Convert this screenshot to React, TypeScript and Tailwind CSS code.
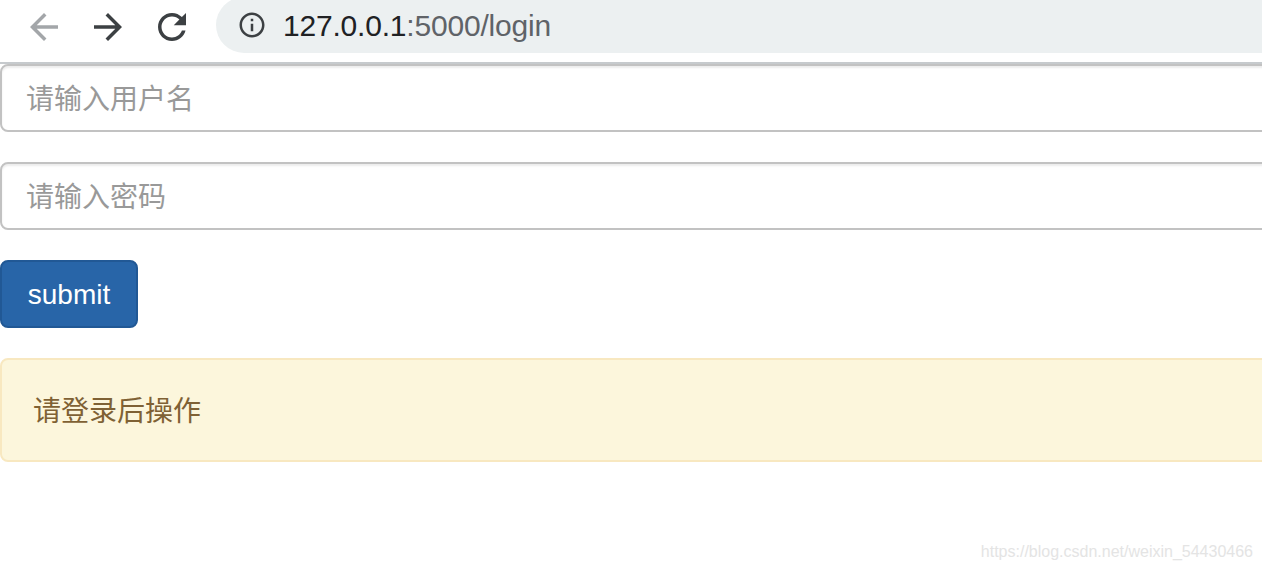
const sans = { fontFamily: '"Liberation Sans", "Noto Sans CJK SC", Arial, sans-serif' };

function BackIcon({ className }: { className?: string }) {
  return (
    <svg viewBox="0 0 24 24" className={className} fill="currentColor">
      <path d="M20 11H7.83l5.59-5.59L12 4l-8 8 8 8 1.41-1.41L7.83 13H20v-2z" />
    </svg>
  );
}

function ForwardIcon({ className }: { className?: string }) {
  return (
    <svg viewBox="0 0 24 24" className={className} fill="currentColor">
      <path d="M12 4l-1.41 1.41L16.17 11H4v2h12.17l-5.58 5.59L12 20l8-8z" />
    </svg>
  );
}

function ReloadIcon({ className }: { className?: string }) {
  return (
    <svg viewBox="0 0 24 24" className={className} fill="currentColor">
      <path d="M17.65 6.35C16.2 4.9 14.21 4 12 4c-4.42 0-7.99 3.58-7.99 8s3.57 8 7.99 8c3.73 0 6.84-2.55 7.73-6h-2.08c-.82 2.33-3.04 4-5.65 4-3.31 0-6-2.69-6-6s2.69-6 6-6c1.66 0 3.14.69 4.22 1.78L13 11h7V4l-2.35 2.35z" />
    </svg>
  );
}

function InfoIcon({ className }: { className?: string }) {
  return (
    <svg viewBox="0 0 24 24" className={className} fill="currentColor">
      <path d="M11 7h2v2h-2zm0 4h2v6h-2zm1-9C6.48 2 2 6.48 2 12s4.48 10 10 10 10-4.48 10-10S17.52 2 12 2zm0 18c-4.41 0-8-3.59-8-8s3.59-8 8-8 8 3.59 8 8-3.59 8-8 8z" />
    </svg>
  );
}

export default function App() {
  return (
    <div className="relative h-[572px] w-full overflow-hidden bg-white" style={sans}>
      {/* browser toolbar */}
      <div className="h-[64px] border-b-2 border-[#c6cacd] bg-white">
        <div className="flex h-[53px] items-center pl-[23px]">
          <BackIcon className="h-[42px] w-[42px] text-[#a3a6a9]" />
          <ForwardIcon className="ml-[22px] h-[42px] w-[42px] text-[#3c4043]" />
          <ReloadIcon className="ml-[22px] h-[42px] w-[42px] text-[#3c4043]" />
          <div className="ml-[23px] flex h-[56px] -mt-[3px] flex-1 items-center rounded-l-[28px] bg-[#ecf0f1] pl-[21px]">
            <InfoIcon className="h-[30px] w-[30px] text-[#3c4043]" />
            <span className="ml-[16px] mt-[2px] text-[30px] leading-none tracking-[-0.2px]">
              <span className="text-[#202124]">127.0.0.1</span>
              <span className="text-[#5f6368]">:5000/login</span>
            </span>
          </div>
        </div>
      </div>

      {/* form */}
      <div className="flex flex-col">
        <div className="w-[1300px]">
          <input
            type="text"
            placeholder="请输入用户名"
            className="h-[68px] w-full rounded-[8px] border-2 border-[#c2c2c2] bg-white pl-[24px] pt-[4px] text-[28px] text-[#555] shadow-[inset_0_2px_2px_rgba(0,0,0,0.075)] outline-none placeholder:text-[#999]"
            style={sans}
          />
        </div>
        <div className="mt-[30px] w-[1300px]">
          <input
            type="password"
            placeholder="请输入密码"
            className="h-[68px] w-full rounded-[8px] border-2 border-[#c2c2c2] bg-white pl-[24px] pt-[4px] text-[28px] text-[#555] shadow-[inset_0_2px_2px_rgba(0,0,0,0.075)] outline-none placeholder:text-[#999]"
            style={sans}
          />
        </div>
        <div className="mt-[30px]">
          <button
            type="button"
            className="h-[68px] w-[138px] rounded-[8px] border-2 border-[#215895] bg-[#2865a8] pt-[2px] text-[28px] text-white"
            style={sans}
          >
            submit
          </button>
        </div>
        <div className="mt-[30px] w-[1300px]">
          <div className="flex h-[104px] items-center rounded-[8px] border-2 border-[#f8e8c0] bg-[#fcf6dc] pl-[31px] pt-[4px] text-[28px] text-[#7f6134]">
            请登录后操作
          </div>
        </div>
      </div>

      {/* watermark */}
      <div className="absolute bottom-[8px] right-[9px] text-[16px] text-[#e4e4e4]">
        https://blog.csdn.net/weixin_54430466
      </div>
    </div>
  );
}
